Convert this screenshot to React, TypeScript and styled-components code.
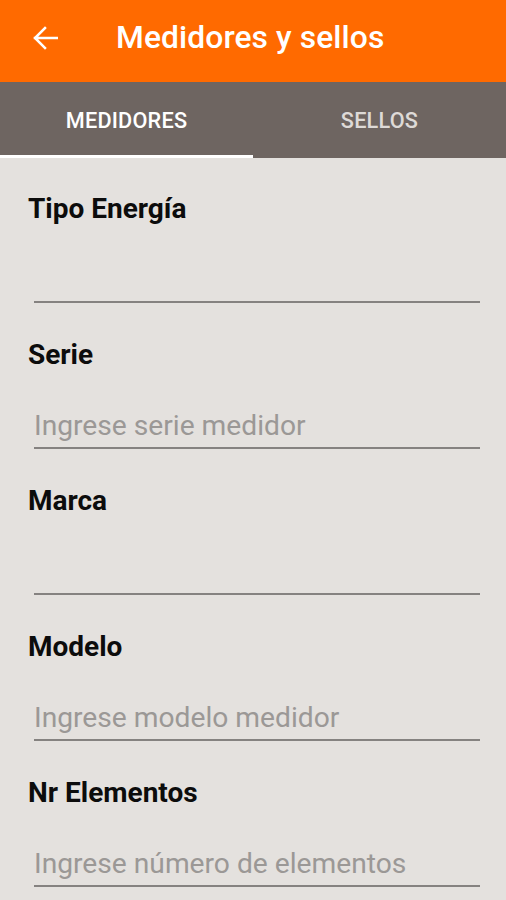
import React from 'react';
import styled, { createGlobalStyle } from 'styled-components';

const GlobalStyle = createGlobalStyle`
  html, body {
    margin: 0;
    padding: 0;
    background: #e4e1de;
  }
  body {
    font-family: Roboto, 'Liberation Sans', sans-serif;
  }
`;

const Screen = styled.div`
  width: 506px;
  height: 900px;
  display: flex;
  flex-direction: column;
  background: #e4e1de;
  overflow: hidden;
`;

const Toolbar = styled.div`
  height: 82px;
  flex-shrink: 0;
  display: flex;
  align-items: center;
  background: #ff6a00;
  color: #ffffff;
  padding-left: 32px;
  box-sizing: border-box;
`;

const BackButton = styled.div`
  width: 26px;
  height: 24px;
  display: flex;
  align-items: center;
  justify-content: center;
  margin-top: -6px;
`;

const Title = styled.div`
  margin-left: 58px;
  margin-top: -9px;
  font-size: 31.8px;
  font-weight: 500;
  letter-spacing: 0.1px;
`;

const TabBar = styled.div`
  height: 76px;
  flex-shrink: 0;
  display: flex;
  background: #6e6561;
`;

const Tab = styled.div<{ $active?: boolean }>`
  flex: 1;
  display: flex;
  align-items: center;
  justify-content: center;
  padding-top: 4px;
  font-size: 21.7px;
  font-weight: 500;
  letter-spacing: 0.2px;
  color: ${({ $active }) => ($active ? '#ffffff' : '#dedad7')};
  border-bottom: 3px solid ${({ $active }) => ($active ? '#ffffff' : 'transparent')};
  box-sizing: border-box;
`;

const Form = styled.div`
  display: flex;
  flex-direction: column;
  padding: 36px 26px 0 28px;
`;

const Field = styled.div`
  display: flex;
  flex-direction: column;
  height: 146px;
`;

const Label = styled.div`
  font-size: 28px;
  font-weight: 700;
  color: #0c0c0c;
  line-height: 30px;
`;

const Input = styled.div`
  margin-top: 42px;
  margin-left: 6px;
  height: 35px;
  border-bottom: 2px solid #858280;
  font-size: 28.2px;
  line-height: 27px;
  color: #9b9896;
  white-space: nowrap;
`;

const fields: [string, string][] = [
  ['Tipo Energía', ''],
  ['Serie', 'Ingrese serie medidor'],
  ['Marca', ''],
  ['Modelo', 'Ingrese modelo medidor'],
  ['Nr Elementos', 'Ingrese número de elementos'],
];

const App = () => (
  <Screen>
    <GlobalStyle />
    <Toolbar>
      <BackButton>
        <svg width="26" height="24" viewBox="0 0 26 24" fill="none">
          <path
            d="M25 12H3M13 2L3 12l10 10"
            stroke="#ffffff"
            strokeWidth="2.5"
            strokeLinecap="square"
          />
        </svg>
      </BackButton>
      <Title>Medidores y sellos</Title>
    </Toolbar>
    <TabBar>
      <Tab $active>MEDIDORES</Tab>
      <Tab>SELLOS</Tab>
    </TabBar>
    <Form>
      {fields.map(([label, placeholder]) => (
        <Field key={label}>
          <Label>{label}</Label>
          <Input>{placeholder}</Input>
        </Field>
      ))}
    </Form>
  </Screen>
);

export default App;
